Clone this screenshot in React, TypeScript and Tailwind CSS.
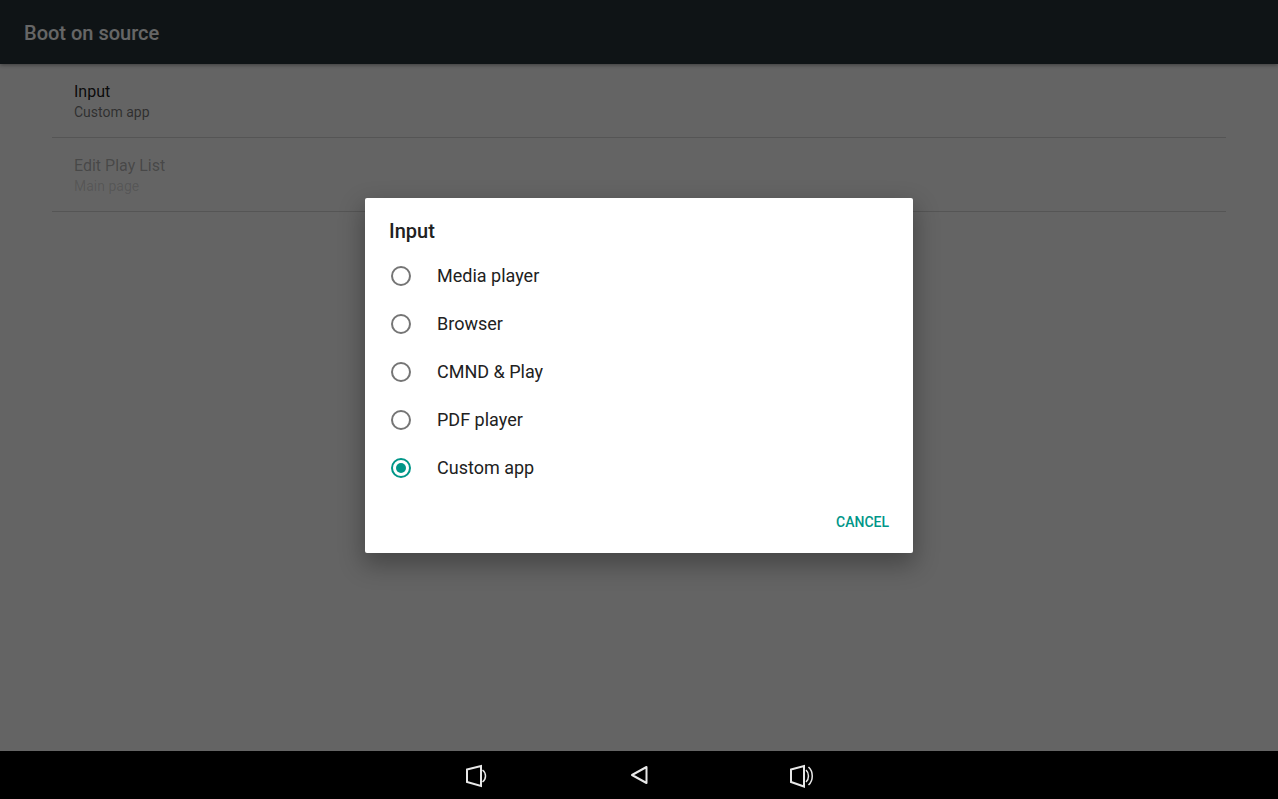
import React, { useState } from 'react';
import clsx from 'clsx';

const SOURCES = ['Media player', 'Browser', 'CMND & Play', 'PDF player', 'Custom app'];

interface PreferenceProps {
  title: string;
  summary: string;
  disabled?: boolean;
}

function Preference({ title, summary, disabled = false }: PreferenceProps) {
  return (
    <li className="border-b border-black/15">
      <button
        type="button"
        disabled={disabled}
        className="block w-full px-[22px] pt-[18px] pb-[15px] text-left"
      >
        <span className={clsx('block text-base leading-5', disabled ? 'text-black/30' : 'text-black/90')}>
          {title}
        </span>
        <span className={clsx('block text-sm leading-5', disabled ? 'text-black/15' : 'text-black/55')}>
          {summary}
        </span>
      </button>
    </li>
  );
}

interface SourceDialogProps {
  value: string;
  onChange: (value: string) => void;
}

function SourceDialog({ value, onChange }: SourceDialogProps) {
  return (
    <div className="absolute inset-0 flex items-center justify-center bg-black/60">
      <div
        role="dialog"
        aria-labelledby="dialog-title"
        className="w-[548px] max-w-full rounded-xs bg-white shadow-[0_10px_24px_2px_rgba(0,0,0,0.3)]"
      >
        <h2 id="dialog-title" className="px-6 pt-[19px] pb-[7px] text-xl font-medium text-[#212121]">
          Input
        </h2>
        {SOURCES.map((source) => (
          <label key={source} className="flex h-12 items-center gap-[26px] px-[26px] text-lg text-[#212121]">
            <input
              type="radio"
              name="source"
              value={source}
              checked={source === value}
              onChange={() => onChange(source)}
              className="size-5 shrink-0 appearance-none rounded-full border-2 border-[#757575] bg-clip-content p-[3px] checked:border-[#009688] checked:bg-[#009688]"
            />
            {source}
          </label>
        ))}
        <div className="flex justify-end px-4 pt-3 pb-[13px]">
          <button type="button" className="h-9 px-2 text-sm font-medium text-[#009688]">
            CANCEL
          </button>
        </div>
      </div>
    </div>
  );
}

function NavigationBar() {
  return (
    <nav className="flex h-12 shrink-0 items-center justify-center gap-[131px] bg-black text-[#e8e8e8]">
      <button type="button" aria-label="Volume down">
        <svg className="size-8" viewBox="0 0 32 32" fill="none" stroke="currentColor" strokeWidth="2">
          <path d="M7 10.5L21 7v20L7 23z" />
          <path d="M22.5 11c4 3 4 9 0 12" strokeWidth="1.5" />
        </svg>
      </button>
      <button type="button" aria-label="Back">
        <svg className="size-8" viewBox="0 0 32 32" fill="none" stroke="currentColor" strokeWidth="2" strokeLinejoin="round">
          <path d="M23.5 8v16L9 16z" />
        </svg>
      </button>
      <button type="button" aria-label="Volume up">
        <svg className="size-8" viewBox="0 0 32 32" fill="none" stroke="currentColor" strokeWidth="2">
          <path d="M5 10.5L18 7v20.500L5 23z" />
          <path d="M20 11c3.300 3 3.300 9 0 12" strokeWidth="1.5" />
          <path d="M22.500 8c5 4.500 5 13.500 0 18" strokeWidth="1.5" />
        </svg>
      </button>
    </nav>
  );
}

export default function App() {
  const [source, setSource] = useState('Custom app');

  return (
    <div className="flex h-screen flex-col bg-[#fafafa] font-[Roboto,sans-serif]">
      <div className="relative flex-1">
        <header className="flex h-16 items-center bg-[#263238] px-6 pt-[2px] shadow-[0_1px_4px_rgba(0,0,0,0.4)]">
          <h1 className="text-xl font-medium text-white">Boot on source</h1>
        </header>
        <ul className="mx-[52px]">
          <Preference title="Input" summary={source} />
          <Preference title="Edit Play List" summary="Main page" disabled />
        </ul>
        <SourceDialog value={source} onChange={setSource} />
      </div>
      <NavigationBar />
    </div>
  );
}
